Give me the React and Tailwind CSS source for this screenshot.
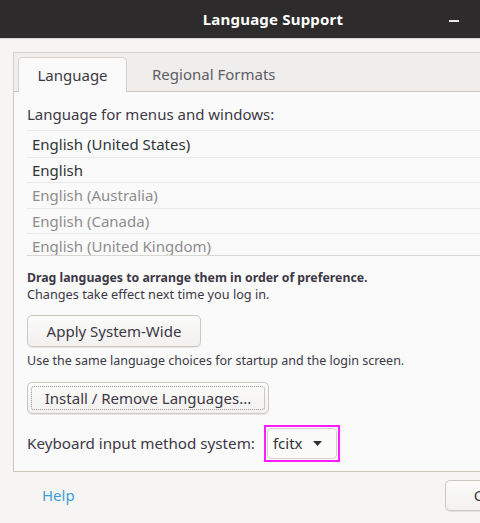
import React from "react";

const font = { fontFamily: '"Noto Sans", "Open Sans", sans-serif' };

function Btn({ children, className = "", focus = false }) {
  return (
    <div
      className={`relative flex items-center justify-center rounded-[5px] border border-[#cdc7c2] bg-gradient-to-b from-[#fbfbfa] to-[#f2f1f0] text-[15px] text-[#3d3846] shadow-[0_1px_0_rgba(0,0,0,0.07)] ${className}`}
    >
      {focus && (
        <div className="absolute inset-[3px] rounded-[3px] border border-dotted border-[#9a9996]" />
      )}
      <span className="relative">{children}</span>
    </div>
  );
}

export default function App() {
  const rows = [
    { t: "English (United States)", dark: true },
    { t: "English", dark: true },
    { t: "English (Australia)", dark: false },
    { t: "English (Canada)", dark: false },
    { t: "English (United Kingdom)", dark: false },
  ];
  return (
    <div className="w-[480px] h-[523px] overflow-hidden bg-[#f6f5f4]" style={font}>
      <div className="w-[546px]">
        {/* Title bar */}
        <div className="relative h-[38px] bg-[#2d2b2b] flex items-center justify-center">
          <span className="text-[15px] font-bold text-white tracking-[0.2px]">Language Support</span>
          <div className="absolute left-[449px] top-[20px] h-[2px] w-[10px] bg-[#e8e8e8]" />
        </div>
        <div className="h-px bg-[#d6d3d0]" />

        <div className="px-[13px] pt-[13px]">
          {/* Notebook tabs */}
          <div className="h-[39px] border border-b-0 border-[#d5d0cc] bg-[#efeeed] flex items-end pl-[4px]">
            <div className="relative -mb-px h-[35px] w-[109px] rounded-t-[5px] border border-b-0 border-[#d5d0cc] bg-[#fafafa] flex items-center justify-center text-[15px] text-[#3d3846]">
              Language
            </div>
            <div className="h-[34px] flex items-center pl-[25px] text-[15px] text-[#5e5c64]">
              Regional Formats
            </div>
          </div>
          {/* Content panel */}
          <div className="border border-[#cdc7c2] bg-[#fafafa] pl-[13px] pb-[9px]">
            <div className="mt-[12px] h-[20px] leading-[20px] text-[15px] text-[#3d3846]">
              Language for menus and windows:
            </div>
            <div className="mt-[6px] h-[126px] overflow-hidden border-t border-b border-[#ebe9e7] border-b-[#d9d6d3]">
              {rows.map((r, i) => (
                <div
                  key={i}
                  className={`h-[25.6px] shrink-0 flex items-center pl-[5px] text-[15px] ${
                    i > 0 ? "border-t border-[#ebe9e7]" : ""
                  } ${r.dark ? "text-[#2e3436]" : "text-[#8e8c8f]"}`}
                >
                  {r.t}
                </div>
              ))}
            </div>
            <div className="mt-[14px] h-[16px] leading-[16px] text-[12.3px] font-bold text-[#3d3846]">
              Drag languages to arrange them in order of preference.
            </div>
            <div className="h-[16px] leading-[16px] text-[12.7px] text-[#3d3846]">
              Changes take effect next time you log in.
            </div>
            <Btn className="mt-[13px] h-[32px] w-[174px]">Apply System-Wide</Btn>
            <div className="mt-[6px] h-[16px] leading-[16px] text-[12.5px] text-[#3d3846]">
              Use the same language choices for startup and the login screen.
            </div>
            <Btn focus className="mt-[13px] h-[32px] w-[242px]">Install / Remove Languages...</Btn>
            <div className="mt-[11px] flex items-center h-[37px]">
              <span className="text-[15.2px] text-[#3d3846]">Keyboard input method system:</span>
              <div className="ml-[9px] h-[37px] w-[76px] border-2 border-[#ff1dff] p-px">
                <div className="h-full w-full rounded-[4px] border border-[#d5d0cc] bg-[#fbfbfa] flex items-center pl-[5px] gap-[10px]">
                  <span className="text-[15px] text-[#2e3436]">fcitx</span>
                  <svg width="9" height="5" viewBox="0 0 9 5">
                    <path d="M0 0 L9 0 L4.5 5 Z" fill="#2e3436" />
                  </svg>
                </div>
              </div>
            </div>
          </div>
          {/* Footer */}
          <div className="flex items-center mt-[8px] h-[31px]">
            <span className="ml-[29px] text-[15px] text-[#3b9fda]">Help</span>
            <Btn className="ml-auto -mr-[16px] shrink-0 h-[31px] w-[104px]">Cancel</Btn>
          </div>
        </div>
      </div>
    </div>
  );
}
